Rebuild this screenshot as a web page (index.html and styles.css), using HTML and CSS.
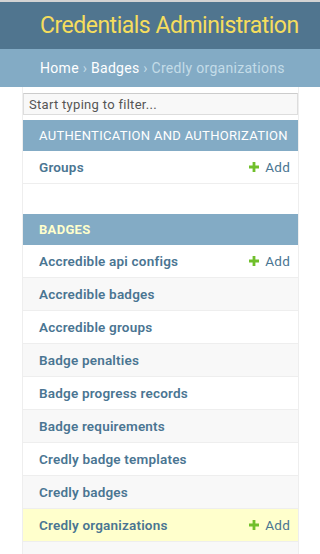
FILE: index.html
```html
<!DOCTYPE html>
<html lang="en">
<head>
  <meta charset="UTF-8">
  <meta name="viewport" content="width=device-width, initial-scale=1.0">
  <title>Credly organizations | Credentials Administration</title>
  <link rel="stylesheet" href="styles.css">
</head>
<body>

  <!-- Header -->
  <div class="header">
    <h1 class="branding">Credentials Administration</h1>
  </div>

  <div class="breadcrumbs">
    <a href="#">Home</a> &rsaquo; <a href="#">Badges</a> &rsaquo; Credly organizations
  </div>

  <div class="main">
    <!-- Sidebar -->
    <nav class="nav-sidebar">
      <input type="search" class="nav-filter" placeholder="Start typing to filter...">

      <table class="module">
        <caption><a href="#" class="section">Authentication and Authorization</a></caption>
        <tbody>
          <tr>
            <th><a href="#">Groups</a></th>
            <td><a href="#" class="addlink"><svg class="plus" width="10" height="10" viewBox="0 0 10 10"><path d="M3.6 0h2.8v3.6H10v2.8H6.4V10H3.6V6.4H0V3.6h3.6z" fill="#70bf2b"/></svg>Add</a></td>
          </tr>
        </tbody>
      </table>

      <table class="module current-app">
        <caption><a href="#" class="section">Badges</a></caption>
        <tbody>
          <tr>
            <th><a href="#">Accredible api configs</a></th>
            <td><a href="#" class="addlink"><svg class="plus" width="10" height="10" viewBox="0 0 10 10"><path d="M3.6 0h2.8v3.6H10v2.8H6.4V10H3.6V6.4H0V3.6h3.6z" fill="#70bf2b"/></svg>Add</a></td>
          </tr>
          <tr><th><a href="#">Accredible badges</a></th><td></td></tr>
          <tr><th><a href="#">Accredible groups</a></th><td></td></tr>
          <tr><th><a href="#">Badge penalties</a></th><td></td></tr>
          <tr><th><a href="#">Badge progress records</a></th><td></td></tr>
          <tr><th><a href="#">Badge requirements</a></th><td></td></tr>
          <tr><th><a href="#">Credly badge templates</a></th><td></td></tr>
          <tr><th><a href="#">Credly badges</a></th><td></td></tr>
          <tr class="current-model">
            <th><a href="#">Credly organizations</a></th>
            <td><a href="#" class="addlink"><svg class="plus" width="10" height="10" viewBox="0 0 10 10"><path d="M3.6 0h2.8v3.6H10v2.8H6.4V10H3.6V6.4H0V3.6h3.6z" fill="#70bf2b"/></svg>Add</a></td>
          </tr>
          <tr class="blank-row"><th></th><td></td></tr>
        </tbody>
      </table>
    </nav>
  </div>

</body>
</html>
```

FILE: styles.css
```css
* {
  box-sizing: border-box;
}

body {
  margin: 0;
  font-family: Roboto, 'Liberation Sans', Arial, sans-serif;
  color: #333;
  background-color: #fff;
  border-top: 2px solid #d3d3d3;
}

a {
  text-decoration: none;
}

/* Header */
.header {
  height: 47px;
  padding: 0 40px;
  display: flex;
  align-items: center;
  background-color: #50758f;
}

.branding {
  margin: 0;
  font-size: 23px;
  font-weight: 400;
  letter-spacing: -0.5px;
  color: #f5dd5d;
  white-space: nowrap;
}

.breadcrumbs {
  padding: 10px 40px;
  font-size: 14px;
  line-height: 18px;
  letter-spacing: 0.3px;
  background-color: #83abc5;
  color: #c4dce8;
  white-space: nowrap;
}

.breadcrumbs a {
  color: #fff;
}

/* Sidebar */
.main {
  display: flex;
}

.nav-sidebar {
  margin-left: 22px;
  width: 277px;
  border-left: 1px solid #eee;
  border-right: 1px solid #eee;
}

.nav-filter {
  display: block;
  width: 100%;
  margin: 6px 0 5px;
  padding: 2px 5px;
  height: 22px;
  border: 1px solid #ddd;
  border-top-color: #ccc;
  background-color: #f8f8f8;
  font-family: inherit;
  font-size: 13px;
  letter-spacing: 0.3px;
  color: #333;
  outline: none;
}

.nav-filter::placeholder {
  color: #555;
}

.module {
  width: 100%;
  border-collapse: collapse;
  margin-bottom: 30px;
}

.module caption {
  text-align: left;
  padding: 8px 8px 8px 16px;
  font-size: 13px;
  line-height: 15px;
  letter-spacing: 0.3px;
  text-transform: uppercase;
  white-space: nowrap;
  overflow: hidden;
  background-color: #83abc5;
}

.module caption .section {
  color: #fff;
}

.current-app caption .section {
  color: #ffc;
  font-weight: bold;
}

.module th,
.module td {
  padding: 8px;
  font-size: 13.5px;
  line-height: 16px;
  border-bottom: 1px solid #eee;
}

.module th {
  width: 100%;
  padding-left: 16px;
  text-align: left;
  font-weight: 600;
  letter-spacing: 0.2px;
}

.module td {
  white-space: nowrap;
  text-align: right;
}

.module tr:nth-child(even) {
  background-color: #f8f8f8;
}

.module tr.current-model {
  background-color: #ffc;
}

.module .blank-row th,
.module .blank-row td {
  height: 33px;
}

.module a {
  color: #4a7592;
}

.addlink {
  display: inline-flex;
  align-items: center;
  font-weight: normal;
  letter-spacing: 0.2px;
}

.plus {
  margin-right: 6px;
}
```
